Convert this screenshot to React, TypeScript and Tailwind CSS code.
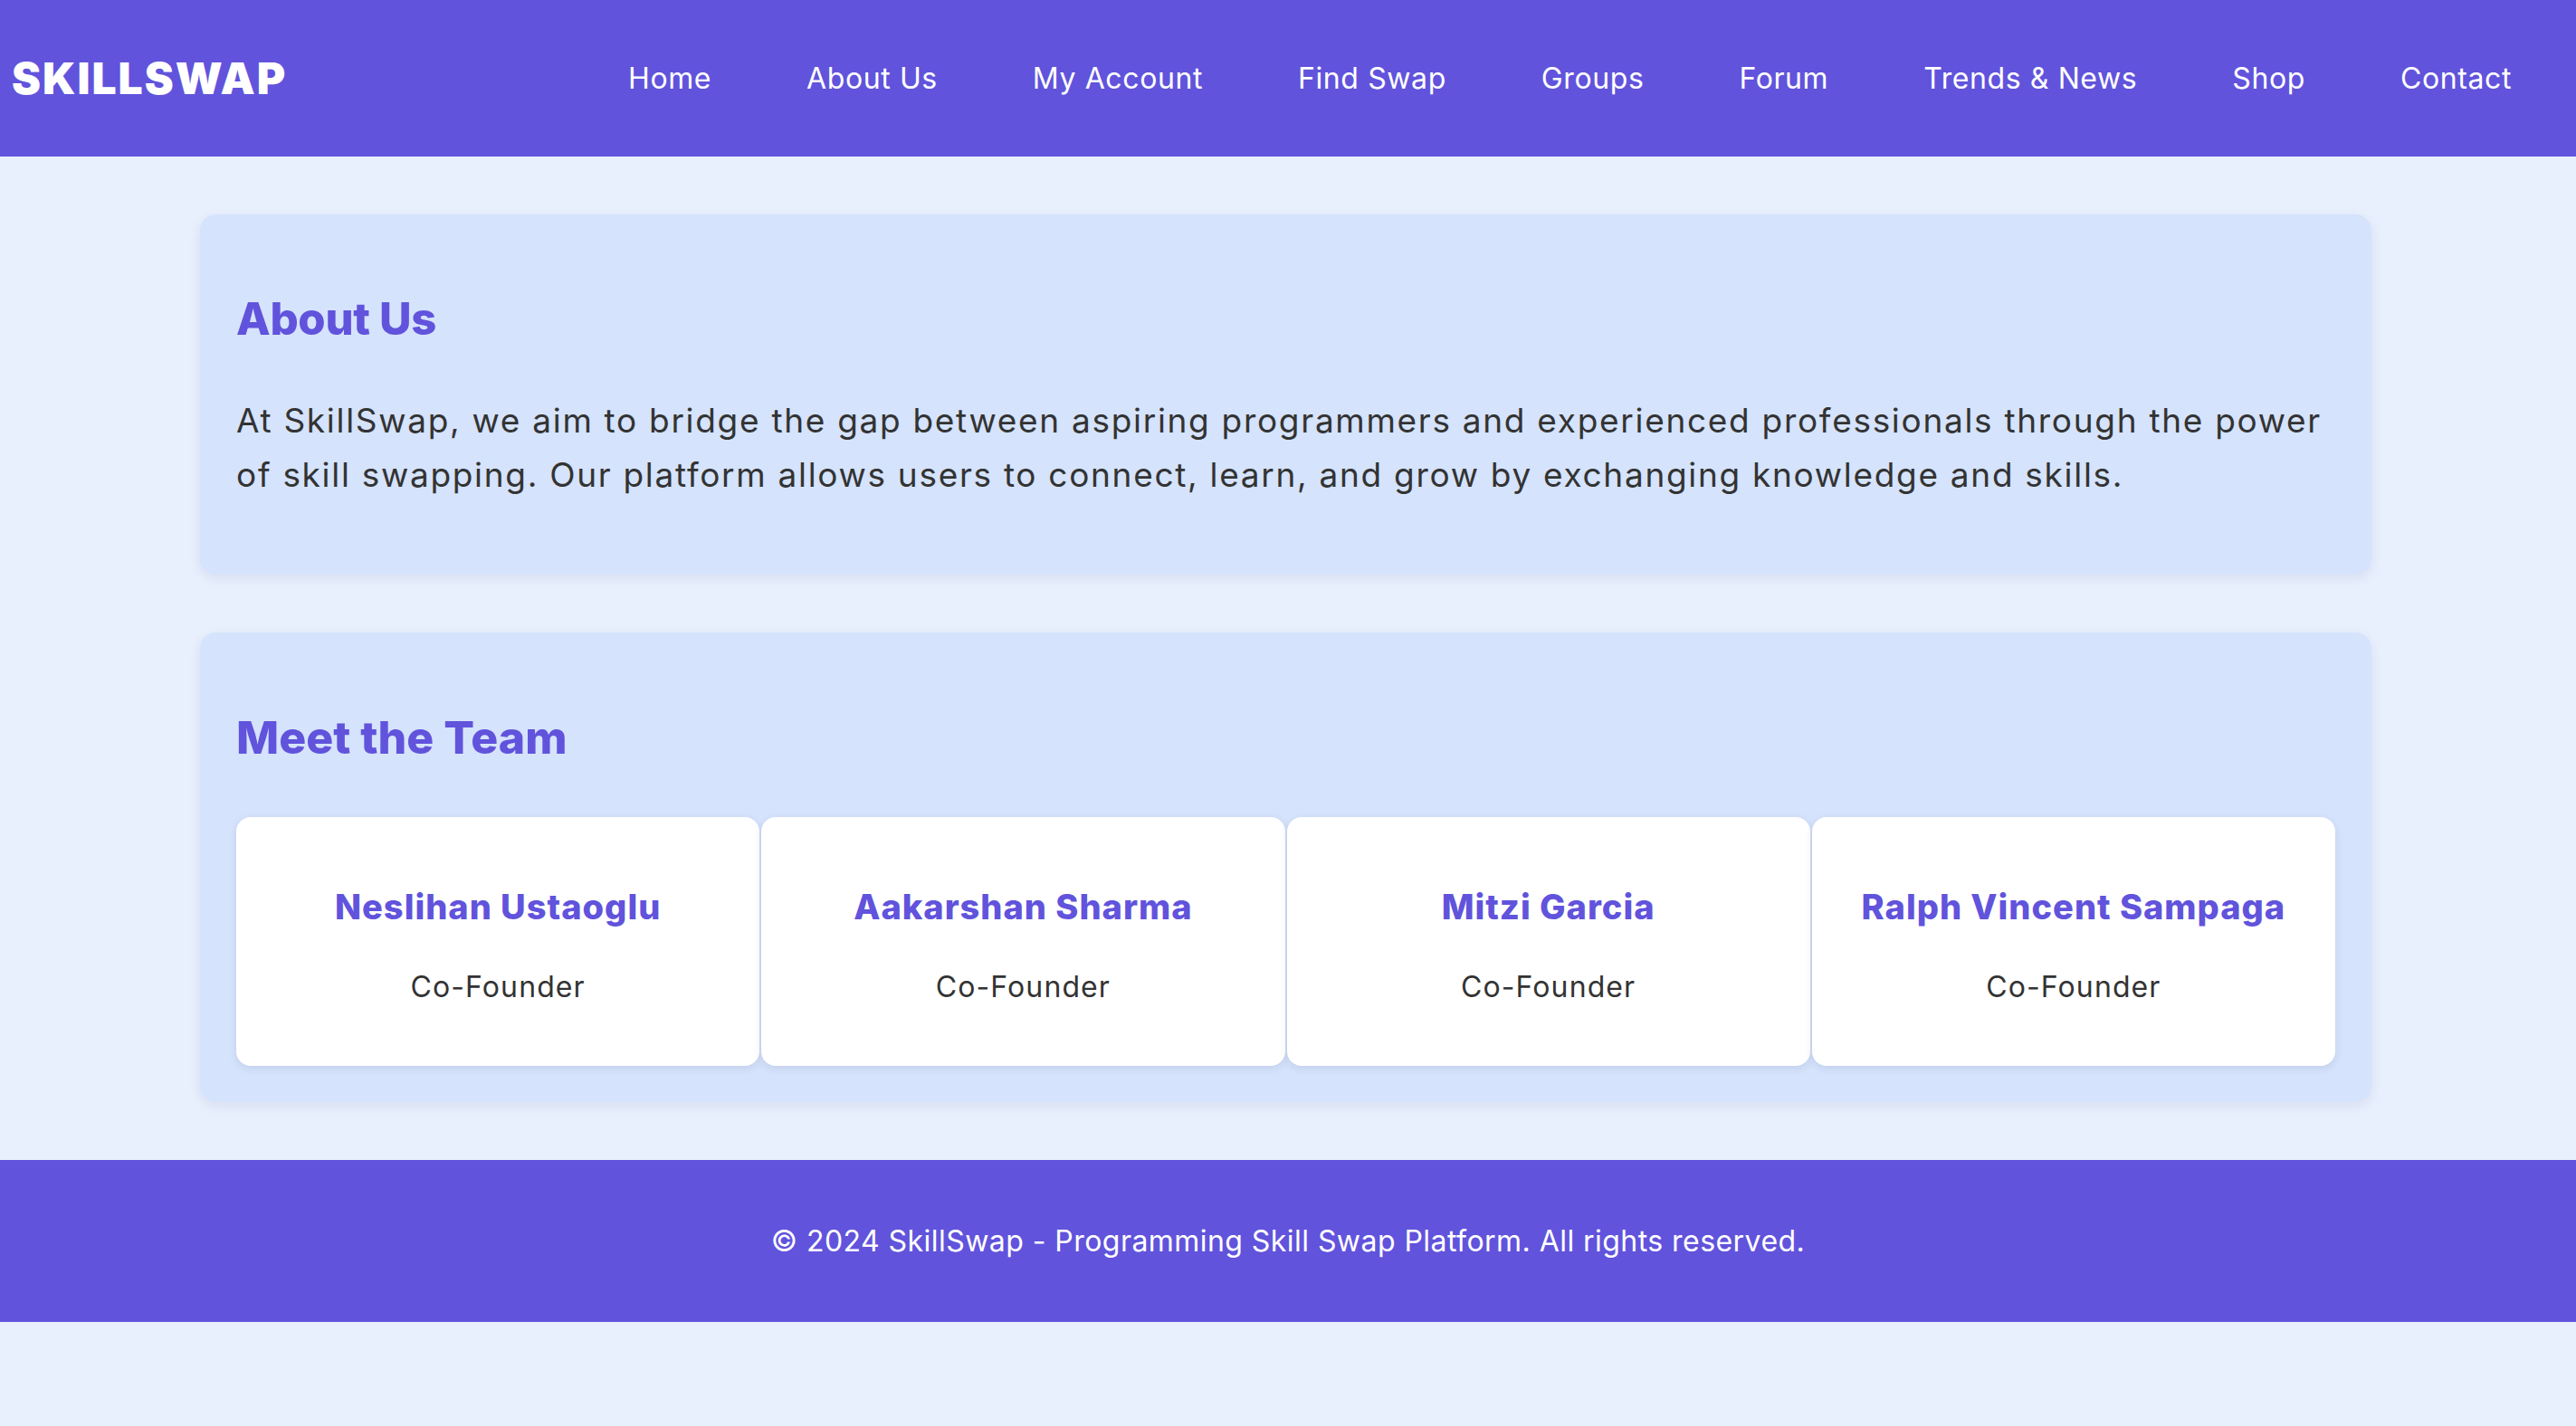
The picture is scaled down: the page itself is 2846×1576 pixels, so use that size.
import React from "react";

const navItems = ["Home", "About Us", "My Account", "Find Swap", "Groups", "Forum", "Trends & News", "Shop", "Contact"];
const team = ["Neslihan Ustaoglu", "Aakarshan Sharma", "Mitzi Garcia", "Ralph Vincent Sampaga"];

export default function App() {
  return (
    <div className="min-h-screen bg-[#e8effd] font-['Inter','Liberation_Sans',sans-serif] text-[#333]">
      <header className="flex h-[173px] items-center justify-between bg-[#6153dc] pl-[13px] pr-[71px]">
        <div className="text-[48px] font-black tracking-[2px] text-white">SKILLSWAP</div>
        <nav className="flex items-center gap-[105px]">
          {navItems.map((n) => (
            <a key={n} className="text-[32px] font-normal tracking-[0.6px] text-white">
              {n}
            </a>
          ))}
        </nav>
      </header>

      <main className="ml-[221px] flex w-[2399px] flex-col gap-[64px] py-[64px]">
        <section className="rounded-[18px] bg-[#d5e3fc] px-[40px] pb-[80px] pt-[86px] shadow-[0_4px_14px_rgba(30,40,90,0.08)]">
          <h2 className="text-[49px] font-extrabold leading-[60px] tracking-[-0.3px] text-[#6153dc]">About Us</h2>
          <p className="mt-[52px] text-[37px] leading-[60px] tracking-[1.7px] text-[#333]">
            At SkillSwap, we aim to bridge the gap between aspiring programmers and experienced professionals through the power of skill swapping. Our platform allows users to connect, learn, and grow by exchanging knowledge and skills.
          </p>
        </section>

        <section className="rounded-[18px] bg-[#d5e3fc] px-[40px] pb-[40px] pt-[86px] shadow-[0_4px_14px_rgba(30,40,90,0.08)]">
          <h2 className="text-[50px] font-extrabold leading-[60px] text-[#6153dc]">Meet the Team</h2>
          <div className="mt-[58px] grid grid-cols-4 gap-[2px]">
            {team.map((t) => (
              <div key={t} className="flex flex-col items-center rounded-[16px] bg-white pb-[63px] pt-[76px] shadow-[0_3px_10px_rgba(30,40,90,0.1)]">
                <h3 className="text-[38px] font-extrabold leading-[46px] tracking-[1px] text-[#6153dc]">{t}</h3>
                <p className="mt-[42px] text-[32px] leading-[48px] tracking-[1.1px] text-[#333]">Co-Founder</p>
              </div>
            ))}
          </div>
        </section>
      </main>

      <footer className="flex h-[179px] items-center justify-center bg-[#6153dc]">
        <p className="text-[32px] tracking-[0.45px] text-white">© 2024 SkillSwap - Programming Skill Swap Platform. All rights reserved.</p>
      </footer>
    </div>
  );
}
